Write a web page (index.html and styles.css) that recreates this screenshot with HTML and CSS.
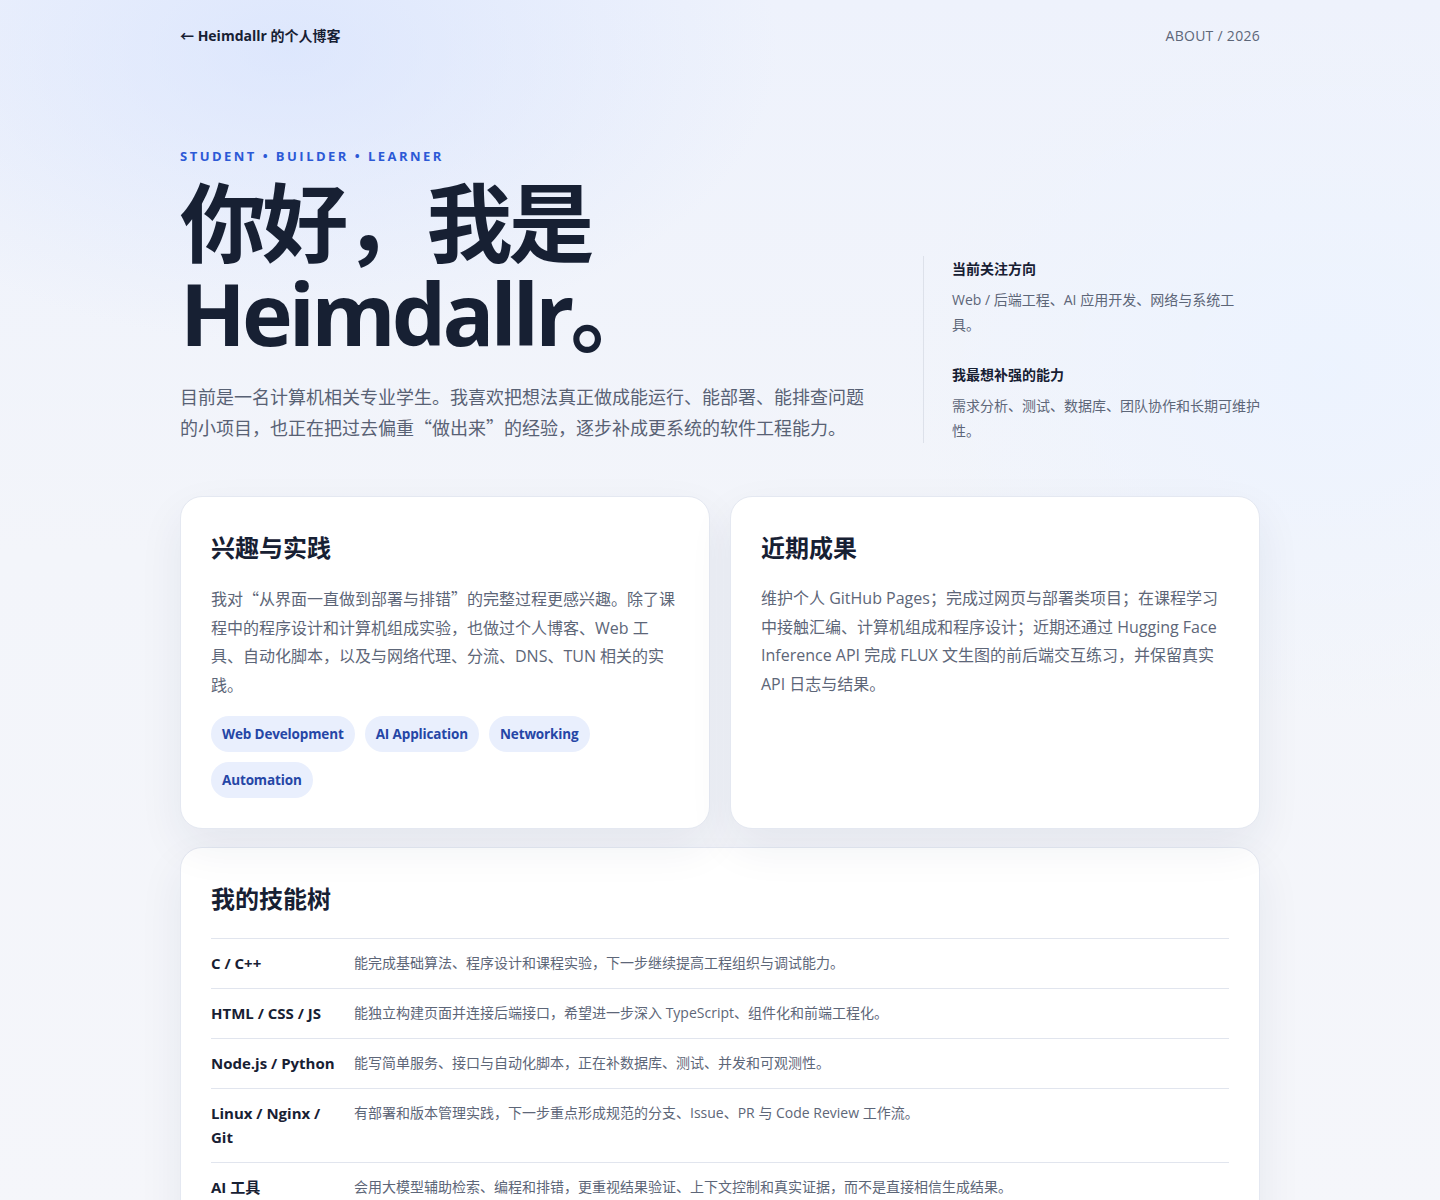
FILE: index.html
```html
<!DOCTYPE html>
<html lang="zh-CN">
<head>
<meta charset="utf-8">
<title>About - Heimdallr</title>
<link rel="stylesheet" href="styles.css">
</head>
<body>
<div class="page">
  <header class="nav">
    <a class="back" href="#">← Heimdallr 的个人博客</a>
    <span class="meta">ABOUT / 2026</span>
  </header>

  <section class="hero">
    <div class="hero-main">
      <p class="eyebrow">STUDENT • BUILDER • LEARNER</p>
      <h1 class="title">你好，我是<br>Heimdallr。</h1>
      <p class="lead">目前是一名计算机相关专业学生。我喜欢把想法真正做成能运行、能部署、能排查问题的小项目，也正在把过去偏重<span class="cjk">“做出来”的经验，逐步补成更系统的软件工程能力。</span></p>
    </div>
    <aside class="hero-side">
      <div class="side-item">
        <h3>当前关注方向</h3>
        <p>Web / 后端工程、AI 应用开发、网络与系统工具。</p>
      </div>
      <div class="side-item">
        <h3>我最想补强的能力</h3>
        <p>需求分析、测试、数据库、团队协作和长期可维护性。</p>
      </div>
    </aside>
  </section>

  <section class="cards">
    <article class="card">
      <h2>兴趣与实践</h2>
      <p><span class="cjk">我对“从界面一直做到部署与排错”的完整过程更感兴趣。</span>除了课程中的程序设计和计算机组成实验，也做过个人博客、Web 工具、自动化脚本，以及与网络代理、分流、DNS、TUN 相关的实践。</p>
      <div class="tags">
        <span class="tag">Web Development</span>
        <span class="tag">AI Application</span>
        <span class="tag">Networking</span>
        <span class="tag">Automation</span>
      </div>
    </article>
    <article class="card">
      <h2>近期成果</h2>
      <p>维护个人 GitHub Pages；完成过网页与部署类项目；在课程学习中接触汇编、计算机组成和程序设计；近期还通过 Hugging Face Inference API 完成 FLUX 文生图的前后端交互练习，并保留真实 API 日志与结果。</p>
    </article>
  </section>

  <section class="card skills">
    <h2>我的技能树</h2>
    <div class="skill-list">
      <div class="skill">
        <div class="skill-name">C / C++</div>
        <div class="skill-desc">能完成基础算法、程序设计和课程实验，下一步继续提高工程组织与调试能力。</div>
      </div>
      <div class="skill">
        <div class="skill-name">HTML / CSS / JS</div>
        <div class="skill-desc">能独立构建页面并连接后端接口，希望进一步深入 TypeScript、组件化和前端工程化。</div>
      </div>
      <div class="skill">
        <div class="skill-name">Node.js / Python</div>
        <div class="skill-desc">能写简单服务、接口与自动化脚本，正在补数据库、测试、并发和可观测性。</div>
      </div>
      <div class="skill">
        <div class="skill-name">Linux / Nginx / Git</div>
        <div class="skill-desc">有部署和版本管理实践，下一步重点形成规范的分支、Issue、PR 与 Code Review 工作流。</div>
      </div>
      <div class="skill">
        <div class="skill-name">AI 工具</div>
        <div class="skill-desc">会用大模型辅助检索、编程和排错，更重视结果验证、上下文控制和真实证据，而不是直接相信生成结果。</div>
      </div>
    </div>
  </section>
</div>
</body>
</html>
```

FILE: styles.css
```css
* { box-sizing: border-box; }

html, body { margin: 0; padding: 0; }

body {
  font-family: "Open Sans", "Noto Sans CJK SC", sans-serif;
  color: #172033;
  background:
    radial-gradient(700px 420px at 20% 4%, rgba(214, 226, 253, 0.7), rgba(214, 226, 253, 0) 70%),
    radial-gradient(600px 500px at 92% 30%, rgba(236, 243, 255, 0.9), rgba(236, 243, 255, 0) 70%),
    linear-gradient(180deg, #eef2fc 0%, #f3f5fa 45%, #f5f6fa 100%);
  min-height: 1200px;
}

.cjk { font-family: "Noto Sans CJK SC", sans-serif; }

.page {
  width: 1080px;
  margin: 0 auto;
}

.nav {
  display: flex;
  justify-content: space-between;
  align-items: center;
  padding-top: 24px;
  height: 46px;
}

.back {
  font-size: 14px;
  font-weight: 700;
  color: #172033;
  text-decoration: none;
}

.meta {
  font-size: 14px;
  color: #5d6678;
  letter-spacing: 0.02em;
}

.hero {
  display: flex;
  justify-content: space-between;
  align-items: flex-end;
  padding-top: 101px;
}

.hero-main { width: 700px; }

.eyebrow {
  margin: 0;
  font-size: 13px;
  line-height: 18px;
  font-weight: 700;
  letter-spacing: 0.19em;
  color: #2c59d6;
}

.title {
  margin: 13px 0 0;
  font-size: 86px;
  line-height: 90px;
  font-weight: 700;
  letter-spacing: -0.045em;
  color: #172033;
}

.lead {
  margin: 24px 0 0;
  font-size: 18px;
  line-height: 30px;
  color: #586174;
  width: 690px;
}

.hero-side {
  width: 337px;
  border-left: 1px solid #dde1ea;
  padding: 2px 0 0 28px;
  margin-bottom: 0;
  display: flex;
  flex-direction: column;
  gap: 27px;
}

.side-item h3 {
  margin: 0;
  font-size: 14px;
  font-weight: 700;
  color: #172033;
  line-height: 22px;
}

.side-item p {
  margin: 7px 0 0;
  font-size: 14px;
  line-height: 25px;
  color: #5d6678;
}

.cards {
  display: grid;
  grid-template-columns: 1fr 1fr;
  gap: 20px;
  margin-top: 53px;
}

.card {
  background: #fff;
  border: 1px solid #e4e8f1;
  border-radius: 22px;
  padding: 30px 30px 30px;
  box-shadow: 0 18px 45px rgba(30, 45, 90, 0.07);
}

.card h2 {
  margin: 4px 0 0;
  font-size: 24px;
  line-height: 34px;
  font-weight: 700;
  color: #172033;
}

.card p {
  margin: 19px 0 0;
  font-size: 16px;
  line-height: 28.5px;
  color: #5d6678;
}

.tags {
  display: flex;
  flex-wrap: wrap;
  gap: 10px;
  margin-top: 17px;
  width: 400px;
}

.tag {
  display: inline-flex;
  align-items: center;
  height: 36px;
  padding: 0 11px;
  border-radius: 18px;
  background: #e9effd;
  color: #2546a6;
  font-size: 13.5px;
  font-weight: 700;
  letter-spacing: -0.01em;
}

.skills {
  margin-top: 18px;
  padding-bottom: 20px;
}

.skill-list {
  margin-top: 22px;
  border-top: 1px solid #e1e5ee;
}

.skill {
  display: flex;
  border-bottom: 1px solid #e1e5ee;
  padding: 12px 0 13px;
  line-height: 24px;
}

.skill-name {
  width: 143px;
  flex: none;
  font-size: 15px;
  font-weight: 700;
  color: #172033;
  padding-right: 14px;
}

.skill-desc {
  font-size: 14px;
  color: #5d6678;
}
```
